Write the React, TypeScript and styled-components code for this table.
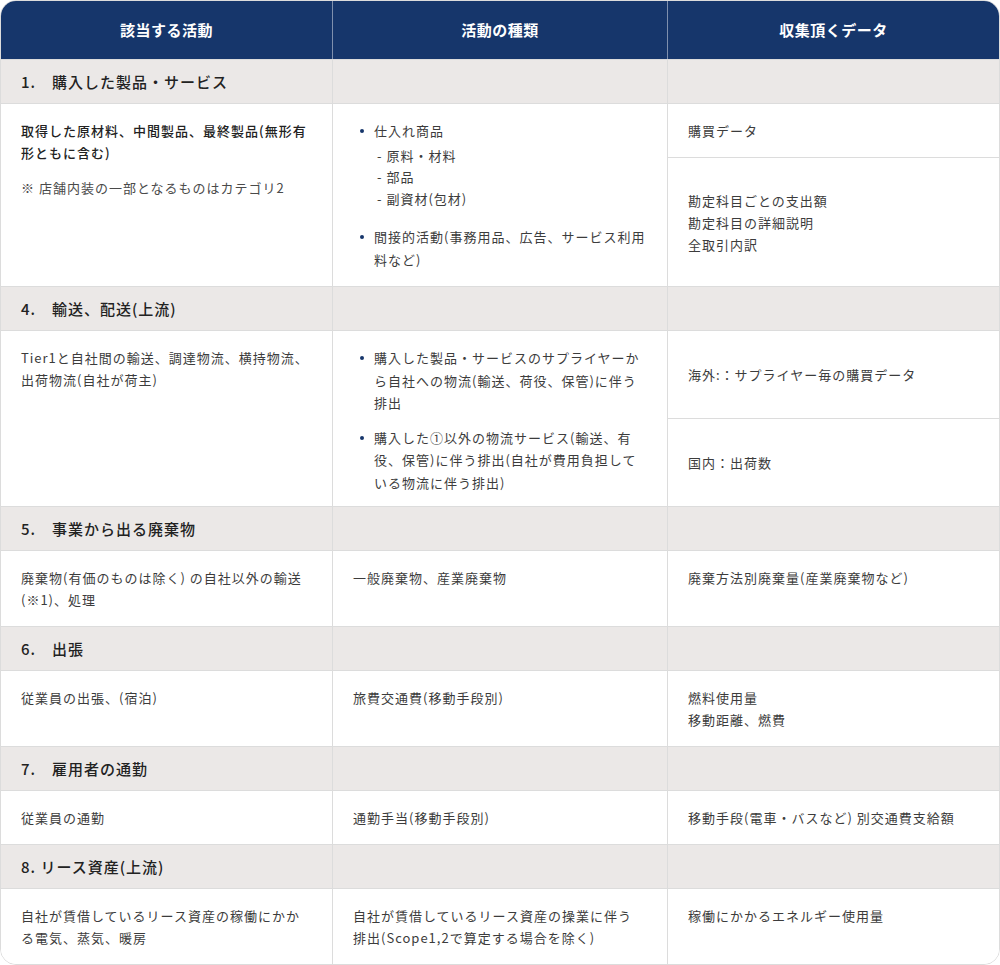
import React from 'react';
import styled, { createGlobalStyle } from 'styled-components';

const GlobalStyle = createGlobalStyle`
  html, body {
    margin: 0;
    padding: 0;
    background: #ffffff;
  }
  body {
    font-family: "Noto Sans CJK JP", "Noto Sans", sans-serif;
    color: #3c3c3c;
  }
  * {
    box-sizing: border-box;
  }
`;

const Table = styled.div`
  width: 1000px;
  border: 1px solid #dcdcdc;
  border-radius: 16px;
  overflow: hidden;
  background: #ffffff;
`;

const Row = styled.div<{ $kind: 'head' | 'section' | 'body' }>`
  display: grid;
  grid-template-columns: 332px 335px 1fr;
  background: ${(p) =>
    p.$kind === 'head' ? '#16366b' : p.$kind === 'section' ? '#ebe8e7' : '#ffffff'};
  border-top: ${(p) => (p.$kind === 'head' ? 'none' : '1px solid #dcdcdc')};
`;

const HeadCell = styled.div`
  padding: 17px 10px 18px;
  line-height: 23px;
  font-size: 15px;
  font-weight: 700;
  letter-spacing: 0.5px;
  color: #ffffff;
  text-align: center;
  border-right: 1px solid rgba(255, 255, 255, 0.45);

  &:last-child {
    border-right: none;
  }
`;

const SectionCell = styled.div`
  padding: 11px 20px 10px;
  line-height: 22px;
  font-size: 15px;
  font-weight: 500;
  letter-spacing: 1px;
  color: #222222;
  border-right: 1px solid #dcdcdc;

  &:last-child {
    border-right: none;
  }
`;

const Cell = styled.div<{ $list?: boolean }>`
  padding: ${(p) => (p.$list ? '16px 20px 12px' : '16px 20px 15px')};
  font-size: 13px;
  line-height: 22px;
  letter-spacing: 1px;
  border-right: 1px solid #dcdcdc;

  &:last-child {
    border-right: none;
  }
`;

const SplitCell = styled.div`
  display: flex;
  flex-direction: column;
`;

const SubCell = styled.div<{ $grow?: boolean }>`
  flex: ${(p) => (p.$grow ? '1 1 0' : '0 0 auto')};
  display: flex;
  flex-direction: column;
  justify-content: center;
  padding: 16px 20px 15px;
  font-size: 13px;
  line-height: 22px;
  letter-spacing: 1px;

  &:not(:first-child) {
    border-top: 1px solid #dcdcdc;
  }
`;

const Lead = styled.p`
  margin: 0;
  font-weight: 500;
  color: #222222;
`;

const Note = styled.p`
  margin: 13px 0 0;
  color: #4a4a4a;
`;

const Line = styled.div``;

const Bullets = styled.ul<{ $tail?: number }>`
  list-style: none;
  margin: 0 0 ${(p) => p.$tail ?? 0}px;
  padding: 0 0 0 21px;
`;

const Bullet = styled.li<{ $gap: number }>`
  position: relative;
  line-height: 22.5px;

  &:not(:first-child) {
    margin-top: ${(p) => p.$gap}px;
  }

  &::before {
    content: '';
    position: absolute;
    left: -14px;
    top: 9px;
    width: 4px;
    height: 4px;
    border-radius: 50%;
    background: #16366b;
  }
`;

const SubList = styled.ul`
  list-style: none;
  margin: 2px 0 0;
  padding: 0 0 0 3px;
`;

const SubItem = styled.li`
  line-height: 21.5px;

  &::before {
    content: '- ';
  }
`;

const App: React.FC = () => {
  return (
    <>
      <GlobalStyle />
      <Table>
        <Row $kind='head'>
          <HeadCell>該当する活動</HeadCell>
          <HeadCell>活動の種類</HeadCell>
          <HeadCell>収集頂くデータ</HeadCell>
        </Row>

        <Row $kind='section'>
          <SectionCell>1.&#12288;購入した製品・サービス</SectionCell>
          <SectionCell />
          <SectionCell />
        </Row>
        <Row $kind='body'>
          <Cell>
            <Lead>取得した原材料、中間製品、最終製品(無形有形ともに含む)</Lead>
            <Note>※ 店舗内装の一部となるものはカテゴリ2</Note>
          </Cell>
          <Cell $list>
            <Bullets $tail={3}>
              <Bullet $gap={17}>
                仕入れ商品
                <SubList>
                  <SubItem>原料・材料</SubItem>
                  <SubItem>部品</SubItem>
                  <SubItem>副資材(包材)</SubItem>
                </SubList>
              </Bullet>
              <Bullet $gap={17}>間接的活動(事務用品、広告、サービス利用料など)</Bullet>
            </Bullets>
          </Cell>
          <SplitCell>
            <SubCell>購買データ</SubCell>
            <SubCell $grow>
              <Line>勘定科目ごとの支出額</Line>
              <Line>勘定科目の詳細説明</Line>
              <Line>全取引内訳</Line>
            </SubCell>
          </SplitCell>
        </Row>

        <Row $kind='section'>
          <SectionCell>4.&#12288;輸送、配送(上流)</SectionCell>
          <SectionCell />
          <SectionCell />
        </Row>
        <Row $kind='body'>
          <Cell>Tier1と自社間の輸送、調達物流、横持物流、出荷物流(自社が荷主)</Cell>
          <Cell $list>
            <Bullets>
              <Bullet $gap={12}>購入した製品・サービスのサプライヤーから自社への物流(輸送、荷役、保管)に伴う排出</Bullet>
              <Bullet $gap={12}>購入した①以外の物流サービス(輸送、有役、保管)に伴う排出(自社が費用負担している物流に伴う排出)</Bullet>
            </Bullets>
          </Cell>
          <SplitCell>
            <SubCell $grow>海外:：サプライヤー毎の購買データ</SubCell>
            <SubCell $grow>国内：出荷数</SubCell>
          </SplitCell>
        </Row>

        <Row $kind='section'>
          <SectionCell>5.&#12288;事業から出る廃棄物</SectionCell>
          <SectionCell />
          <SectionCell />
        </Row>
        <Row $kind='body'>
          <Cell>廃棄物(有価のものは除く) の自社以外の輸送(※1)、処理</Cell>
          <Cell>一般廃棄物、産業廃棄物</Cell>
          <Cell>廃棄方法別廃棄量(産業廃棄物など)</Cell>
        </Row>

        <Row $kind='section'>
          <SectionCell>6.&#12288;出張</SectionCell>
          <SectionCell />
          <SectionCell />
        </Row>
        <Row $kind='body'>
          <Cell>従業員の出張、(宿泊)</Cell>
          <Cell>旅費交通費(移動手段別)</Cell>
          <Cell>
            <Line>燃料使用量</Line>
            <Line>移動距離、燃費</Line>
          </Cell>
        </Row>

        <Row $kind='section'>
          <SectionCell>7.&#12288;雇用者の通勤</SectionCell>
          <SectionCell />
          <SectionCell />
        </Row>
        <Row $kind='body'>
          <Cell>従業員の通勤</Cell>
          <Cell>通勤手当(移動手段別)</Cell>
          <Cell>移動手段(電車・バスなど) 別交通費支給額</Cell>
        </Row>

        <Row $kind='section'>
          <SectionCell>8. リース資産(上流)</SectionCell>
          <SectionCell />
          <SectionCell />
        </Row>
        <Row $kind='body'>
          <Cell>自社が賃借しているリース資産の稼働にかかる電気、蒸気、暖房</Cell>
          <Cell>
            自社が賃借しているリース資産の操業に伴う
            <br />
            排出(Scope1,2で算定する場合を除く)
          </Cell>
          <Cell>稼働にかかるエネルギー使用量</Cell>
        </Row>
      </Table>
    </>
  );
};

export default App;
